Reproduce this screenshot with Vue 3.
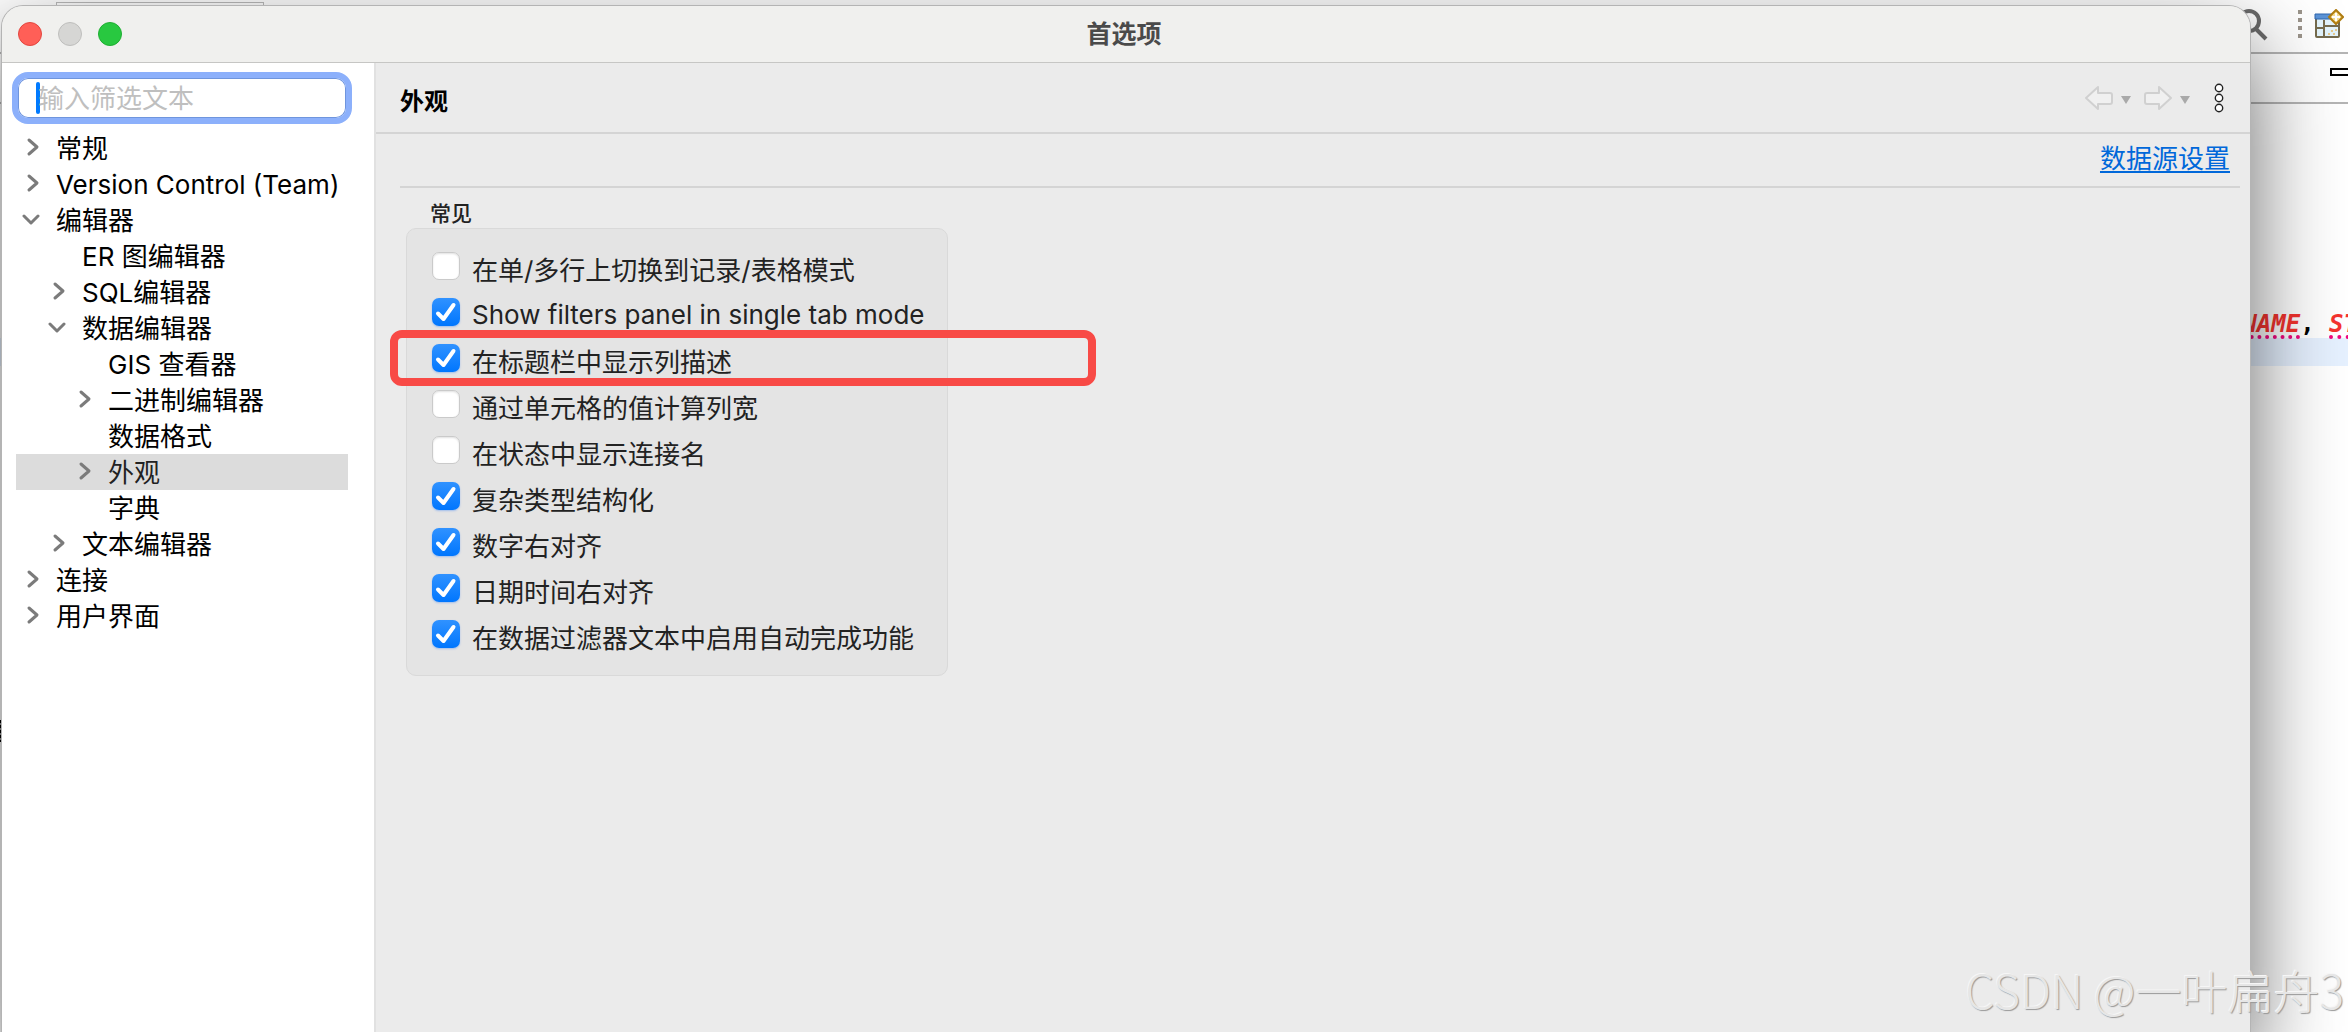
<template>
  <div class="desktop">
    <div class="workbench">
      <div class="left-edge"></div>
      <div class="editor-tab"></div>
      <div class="toolbar">
        <button class="tool search" aria-label="搜索">
          <svg width="38" height="38" viewBox="0 0 38 38">
            <circle cx="19" cy="18" r="10" fill="none" stroke="#6b6b6b" stroke-width="4" />
            <path d="M26 26 L36 36" stroke="#6b6b6b" stroke-width="4" />
          </svg>
        </button>
        <span class="grip"><i></i><i></i><i></i><i></i></span>
        <button class="tool" aria-label="打开透视图">
          <svg width="30" height="30" viewBox="0 0 30 30">
            <rect x="2" y="6" width="23" height="22" rx="1" fill="#e2f3fb" stroke="#756b4d" stroke-width="2" />
            <path d="M1 5h18v5H1z" fill="#5b93d6" stroke="#2f66ae" />
            <path d="M10 11v16M2 19h8M10 17h14" stroke="#756b4d" stroke-width="2" fill="none" />
            <path d="M14 25h2M17 22h2M21 21h2M19 25h2" stroke="#e6c98c" stroke-width="2" />
            <path d="M22 1l7 7-7 7-7-7z" fill="#f6dc8d" stroke="#b07d12" stroke-width="2" />
            <path d="M22 4v8M18 8h8" stroke="#fff" stroke-width="2" />
          </svg>
        </button>
      </div>
      <div class="tab-row"><span class="minimize"></span></div>
      <div class="code">
        <div class="code-line"><span class="err">NAME</span>, <span class="err">ST</span></div>
        <div class="code-line current"></div>
      </div>
    </div>

    <main class="dialog">
      <header class="titlebar">
        <div class="lights">
          <button class="light close" aria-label="关闭"></button>
          <button class="light min" aria-label="最小化" disabled></button>
          <button class="light max" aria-label="缩放"></button>
        </div>
        <h1>首选项</h1>
      </header>

      <div class="body">
        <nav class="sidebar">
          <div class="filter">
            <span class="caret"></span>
            <input v-model="filterText" type="text" placeholder="输入筛选文本" aria-label="输入筛选文本">
          </div>
          <ul class="tree">
            <li v-for="item in treeItems" :key="item.label">
              <button
                class="node"
                :class="['level-' + item.level, { selected: item.label === selected }]"
                @click="selected = item.label"
              >
                <span class="arrow">
                  <svg v-if="item.state === 'closed'" width="20" height="20" viewBox="0 0 20 20">
                    <path d="M7 3 L15 10 L7 17" />
                  </svg>
                  <svg v-if="item.state === 'open'" width="20" height="20" viewBox="0 0 20 20">
                    <path d="M2 7 L9 14 L16 7" />
                  </svg>
                </span>
                {{ item.label }}
              </button>
            </li>
          </ul>
        </nav>

        <section class="page">
          <div class="page-header">
            <h2>外观</h2>
            <div class="history">
              <button aria-label="后退">
                <svg width="30" height="26" viewBox="0 0 30 26">
                  <path class="nav-arrow" d="M2 13 L14 2 V8 H26 Q28 8 28 10 V17 Q28 19 26 19 H14 V24 Z" />
                </svg>
              </button>
              <button class="drop" aria-label="后退历史">
                <svg width="10" height="8" viewBox="0 0 10 8"><path d="M0 0h10L5 8z" fill="#a9a9a9" /></svg>
              </button>
              <button aria-label="前进">
                <svg width="30" height="26" viewBox="0 0 30 26">
                  <path class="nav-arrow" d="M28 13 L16 2 V8 H4 Q2 8 2 10 V17 Q2 19 4 19 H16 V24 Z" />
                </svg>
              </button>
              <button class="drop" aria-label="前进历史">
                <svg width="10" height="8" viewBox="0 0 10 8"><path d="M0 0h10L5 8z" fill="#a9a9a9" /></svg>
              </button>
              <button class="more" aria-label="菜单">
                <svg width="10" height="30" viewBox="0 0 10 30">
                  <g fill="#fff" stroke="#222" stroke-width="1.4">
                    <circle cx="5" cy="5" r="3.7" />
                    <circle cx="5" cy="15" r="3.7" />
                    <circle cx="5" cy="25" r="3.7" />
                  </g>
                </svg>
              </button>
            </div>
          </div>

          <div class="page-body">
            <div class="link-row"><a href="#">数据源设置</a></div>
            <h3>常见</h3>
            <div class="group">
              <label
                v-for="option in options"
                :key="option.label"
                class="option"
                :class="{ marked: option.marked }"
              >
                <span class="box">
                  <input v-model="option.checked" type="checkbox">
                  <svg v-if="option.checked" width="28" height="28" viewBox="0 0 28 28">
                    <path d="M6 15.5 L11.5 21 L21.5 7" />
                  </svg>
                </span>
                <span>{{ option.label }}</span>
              </label>
            </div>
          </div>
        </section>
      </div>
    </main>

    <div class="watermark">CSDN @一叶扁舟3</div>
  </div>
</template>

<script setup>
import { ref } from 'vue';

const filterText = ref('');
const selected = ref('外观');

// 左侧树
const treeItems = [
  { label: '常规', level: 0, state: 'closed' },
  { label: 'Version Control (Team)', level: 0, state: 'closed' },
  { label: '编辑器', level: 0, state: 'open' },
  { label: 'ER 图编辑器', level: 1 },
  { label: 'SQL编辑器', level: 1, state: 'closed' },
  { label: '数据编辑器', level: 1, state: 'open' },
  { label: 'GIS 查看器', level: 2 },
  { label: '二进制编辑器', level: 2, state: 'closed' },
  { label: '数据格式', level: 2 },
  { label: '外观', level: 2, state: 'closed' },
  { label: '字典', level: 2 },
  { label: '文本编辑器', level: 1, state: 'closed' },
  { label: '连接', level: 0, state: 'closed' },
  { label: '用户界面', level: 0, state: 'closed' },
];

// 常见选项
const options = ref([
  { label: '在单/多行上切换到记录/表格模式', checked: false },
  { label: 'Show filters panel in single tab mode', checked: true },
  { label: '在标题栏中显示列描述', checked: true, marked: true },
  { label: '通过单元格的值计算列宽', checked: false },
  { label: '在状态中显示连接名', checked: false },
  { label: '复杂类型结构化', checked: true },
  { label: '数字右对齐', checked: true },
  { label: '日期时间右对齐', checked: true },
  { label: '在数据过滤器文本中启用自动完成功能', checked: true },
]);
</script>

<style>
body {
  margin: 0;
  background: #fff;
}
</style>

<style scoped>
.desktop {
  position: relative;
  display: flex;
  min-height: 100vh;
  overflow: hidden;
  font-family: Inter, "Noto Sans CJK SC", sans-serif;
  font-size: 26px;
  color: #000;
}

button {
  padding: 0;
  border: 0;
  background: none;
  font: inherit;
  color: inherit;
}

svg {
  display: block;
}

/* 后面的主窗口 */
.workbench {
  position: absolute;
  inset: 0;
  overflow: hidden;
}

.left-edge {
  position: absolute;
  top: 720px;
  left: 0;
  width: 2px;
  height: 22px;
  background: repeating-linear-gradient(#000 0 3px, #999 3px 5px);
}

.editor-tab {
  position: absolute;
  top: 2px;
  left: 56px;
  width: 206px;
  height: 40px;
  border: 1px solid #bbb;
}

.toolbar {
  display: flex;
  align-items: center;
  justify-content: flex-end;
  height: 48px;
  padding: 0 4px 4px 0;
  border-bottom: 2px solid #b5b5b5;
}

.search {
  margin: 0 30px 4px 0;
}

.grip {
  display: flex;
  flex-direction: column;
  gap: 4px;
  margin-right: 12px;
}

.grip i {
  width: 4px;
  height: 4px;
  background: #9b948b;
}

.tab-row {
  display: flex;
  align-items: center;
  justify-content: flex-end;
  height: 48px;
  border-bottom: 2px solid #b5b5b5;
}

.minimize {
  width: 16px;
  height: 4px;
  margin: 0 0 12px;
  border: 2px solid #000;
  border-right: 0;
}

.code {
  padding-top: 206px;
  font-family: "DejaVu Sans Mono", monospace;
  font-size: 24px;
  font-weight: bold;
}

.code-line {
  height: 28px;
  margin-right: -10px;
  line-height: 28px;
  text-align: right;
  white-space: pre;
}

.code-line.current {
  background: #e6f1ff;
}

.err {
  color: #f5332f;
  font-style: italic;
  text-decoration: underline dotted #f0087f 4px;
  text-underline-offset: 3px;
  text-decoration-skip-ink: none;
}

/* 首选项窗口 */
.dialog {
  position: relative;
  display: flex;
  flex: 1;
  flex-direction: column;
  min-width: 0;
  margin: 5px 97px 0 1px;
  border: 1px solid #b4b4b4;
  border-bottom: 0;
  border-radius: 22px 22px 0 0;
  background: #ebebeb;
  box-shadow: 0 36px 90px rgba(0, 0, 0, 0.6);
  overflow: hidden;
}

.titlebar {
  display: grid;
  grid-template-columns: 1fr auto 1fr;
  align-items: center;
  height: 56px;
  padding: 0 20px 0 16px;
  border-bottom: 1px solid #c6c6c4;
  background: #f0f0ee;
}

.titlebar h1 {
  margin: 0;
  font-size: 25px;
  font-weight: bold;
  line-height: 36px;
  color: #4a4a4a;
}

.lights {
  display: flex;
  gap: 16px;
}

.light {
  width: 24px;
  height: 24px;
  border: 1px solid #e2463f;
  border-radius: 50%;
  background: #ff5f57;
}

.light.min {
  border-color: #bebebc;
  background: #d6d6d4;
}

.light.max {
  border-color: #1fae32;
  background: #28c840;
}

.body {
  display: flex;
  flex: 1;
}

.sidebar {
  width: 372px;
  border-right: 2px solid #e1e1e1;
  background: #fff;
}

.filter {
  display: flex;
  align-items: center;
  height: 40px;
  margin: 9px 22px 0 10px;
  padding-left: 18px;
  border: 6px solid #8cb0fb;
  border-radius: 16px;
  box-shadow: inset 0 0 0 1px #6f95dd;
}

.caret {
  width: 4px;
  height: 32px;
  margin-right: -2px;
  border-radius: 2px;
  background: #007aff;
}

.filter input {
  flex: 1;
  min-width: 0;
  height: 36px;
  padding: 0;
  border: 0;
  outline: 0;
  background: none;
  font: inherit;
}

.filter input::placeholder {
  color: #bfbfbf;
}

.tree {
  margin: 6px 26px 0 14px;
  padding: 0;
  list-style: none;
}

.node {
  display: flex;
  align-items: center;
  width: 100%;
  height: 36px;
  padding: 2px 0 0 6px;
  line-height: 34px;
  text-align: left;
  white-space: nowrap;
}

.node.level-1 {
  padding-left: 32px;
}

.node.level-2 {
  padding-left: 58px;
}

.node.selected {
  background: #dcdcdc;
  color: #222;
}

.arrow {
  flex: none;
  width: 34px;
  height: 24px;
}

.arrow path {
  fill: none;
  stroke: #7b7b7b;
  stroke-width: 3;
  stroke-linecap: round;
  stroke-linejoin: round;
}

.page {
  flex: 1;
  min-width: 0;
}

.page-header {
  display: flex;
  align-items: center;
  justify-content: space-between;
  height: 69px;
  padding: 0 26px 0 24px;
  border-bottom: 2px solid #d4d4d4;
}

.page-header h2 {
  margin: 0;
  padding-top: 8px;
  font-size: 24px;
  font-weight: bold;
  line-height: 36px;
}

.history {
  display: flex;
  align-items: center;
}

.nav-arrow {
  fill: #f0f0f0;
  stroke: #d0d0d0;
  stroke-width: 2;
  stroke-linejoin: round;
}

.drop {
  margin: 4px 12px 0 7px;
}

.more {
  margin-left: 12px;
}

.page-body {
  padding: 0 10px 0 24px;
}

.link-row {
  display: flex;
  justify-content: flex-end;
  height: 52px;
  padding-right: 10px;
  border-bottom: 2px solid #d4d4d4;
  line-height: 50px;
}

.link-row a {
  color: #0068da;
  text-decoration-thickness: 2px;
  text-underline-offset: 3px;
}

.page-body h3 {
  margin: 0 0 0 30px;
  padding-top: 12px;
  font-size: 21px;
  font-weight: 500;
  line-height: 28px;
  color: #222;
}

.group {
  display: flex;
  flex-direction: column;
  width: fit-content;
  margin-left: 6px;
  padding: 16px 23px 16px 25px;
  border: 1px solid #d9d9d9;
  border-radius: 10px;
  background: #e4e4e4;
  color: #222;
}

.option {
  position: relative;
  display: flex;
  align-items: center;
  gap: 12px;
  height: 46px;
  white-space: nowrap;
}

/* 红框标注 */
.option.marked::after {
  content: "";
  position: absolute;
  top: -7px;
  left: -42px;
  width: 690px;
  height: 40px;
  border: 8px solid #f84a46;
  border-radius: 12px;
  pointer-events: none;
}

.box {
  position: relative;
  width: 28px;
  height: 32px;
}

.box input {
  display: block;
  appearance: none;
  width: 28px;
  height: 28px;
  margin: 0;
  border: 1px solid #cacaca;
  border-radius: 7px;
  background: #fff;
  box-shadow: inset 0 1px 2px rgba(0, 0, 0, 0.12);
}

.box input:checked {
  border: 0;
  background: linear-gradient(#3092ff, #0076fe);
  box-shadow: 0 1px 2px rgba(0, 100, 255, 0.3);
}

.box svg {
  position: absolute;
  top: 0;
  left: 0;
  pointer-events: none;
}

.box path {
  fill: none;
  stroke: #fff;
  stroke-width: 4;
  stroke-linecap: round;
  stroke-linejoin: round;
}

.watermark {
  position: absolute;
  right: 4px;
  bottom: 10px;
  font-family: "Noto Sans CJK SC", sans-serif;
  font-size: 46px;
  font-weight: 300;
  line-height: 66px;
  color: #e6e6e6;
  text-shadow: 1px 1px 1px #999, -1px -1px 0 #f6f6f6;
}
</style>
